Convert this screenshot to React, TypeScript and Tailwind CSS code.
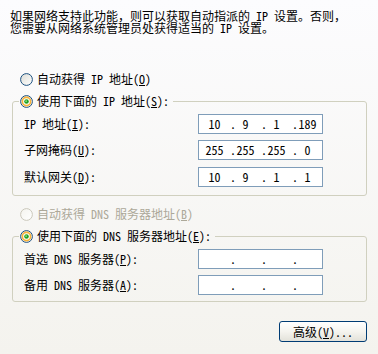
import React from "react";

function Radio({ checked = false, disabled = false, id }: { checked?: boolean; disabled?: boolean; id: string }) {
  return (
    <svg width="13" height="13" viewBox="0 0 13 13" className="shrink-0">
      <defs>
        <linearGradient id={id} x1="0" y1="0" x2="1" y2="1">
          <stop offset="0" stopColor={disabled ? "#f4f3ee" : "#dcdcd5"} />
          <stop offset="1" stopColor="#ffffff" />
        </linearGradient>
      </defs>
      <circle cx="6.5" cy="6.5" r="5.9" fill={`url(#${id})`} stroke={disabled ? "#cac8bb" : "#1c5180"} strokeWidth="1" />
      {checked && (
        <>
          <circle cx="6.5" cy="6.5" r="4.1" fill="#ffffff" stroke="#f8b33a" strokeWidth="1.6" />
          <circle cx="6.5" cy="6.5" r="2.3" fill="#21a121" />
          <circle cx="6.1" cy="6.1" r="0.9" fill="#8ee68e" />
        </>
      )}
    </svg>
  );
}

function IpBox({ parts }: { parts: string[] }) {
  return (
    <div className="h-[20px] w-[125px] border border-[#7f9db9] bg-white grid grid-cols-[31px_31px_31px_31px] items-center">
      {parts.map((p, i) => (
        <div key={i} className="relative h-full flex items-center justify-center">
          {i > 0 && <span className="absolute left-[0px] top-[3px] leading-[12px]">.</span>}
          <span className="leading-[12px]">{p}</span>
        </div>
      ))}
    </div>
  );
}

function Row({ label, parts, last = false }: { label: React.ReactNode; parts: string[]; last?: boolean }) {
  return (
    <div className={`grid grid-cols-[174px_125px] items-center h-[20px] ${last ? "mt-[1px]" : ""}`}>
      <span>{label}</span>
      <IpBox parts={parts} />
    </div>
  );
}

export default function App() {
  return (
    <div className="w-[378px] h-[354px] overflow-hidden bg-gradient-to-b from-[#fcfcfe] to-[#f4f3ee] text-[12px] leading-[12px] text-black font-['Noto_Sans_Mono_CJK_SC','Noto_Sans_CJK_SC',monospace]">
      <p className="pt-[10px] pl-[10px] leading-[12px]">
        如果网络支持此功能，则可以获取自动指派的 IP 设置。否则，
        <br />
        您需要从网络系统管理员处获得适当的 IP 设置。
      </p>

      <div className="mt-[38px] h-[14px] flex items-center gap-[4px] pl-[20px]">
        <Radio id="r1" />
        <span>
          自动获得 IP 地址(<span className="underline underline-offset-[1px]">O</span>)
        </span>
      </div>

      <fieldset className="mt-[8px] ml-[12px] w-[355px] border border-[#d0d0bf] rounded-[3px] pl-[6px] pb-[8px]">
        <legend className="h-[14px] flex items-center gap-[4px] pl-[1px] pr-[4px]">
          <Radio id="r2" checked />
          <span>
            使用下面的 IP 地址(<span className="underline underline-offset-[1px]">S</span>):
          </span>
        </legend>
        <div className="pl-[5px] pt-[6px] flex flex-col gap-[6px]">
          <Row
            label={
              <>
                IP 地址(<span className="underline underline-offset-[1px]">I</span>):
              </>
            }
            parts={["10", "9", "1", "189"]}
          />
          <Row
            label={
              <>
                子网掩码(<span className="underline underline-offset-[1px]">U</span>):
              </>
            }
            parts={["255", "255", "255", "0"]}
          />
          <Row
            last
            label={
              <>
                默认网关(<span className="underline underline-offset-[1px]">D</span>):
              </>
            }
            parts={["10", "9", "1", "1"]}
          />
        </div>
      </fieldset>

      <div className="mt-[11px] h-[14px] flex items-center gap-[4px] pl-[20px] text-[#aca899]">
        <Radio id="r3" disabled />
        <span>
          自动获得 DNS 服务器地址(<span className="underline underline-offset-[1px]">B</span>)
        </span>
      </div>

      <fieldset className="mt-[8px] ml-[12px] w-[355px] border border-[#d0d0bf] rounded-[3px] pl-[6px] pb-[6px]">
        <legend className="h-[14px] flex items-center gap-[4px] pl-[1px] pr-[4px]">
          <Radio id="r4" checked />
          <span>
            使用下面的 DNS 服务器地址(<span className="underline underline-offset-[1px]">E</span>):
          </span>
        </legend>
        <div className="pl-[5px] pt-[6px] flex flex-col gap-[6px]">
          <Row
            label={
              <>
                首选 DNS 服务器(<span className="underline underline-offset-[1px]">P</span>):
              </>
            }
            parts={["", "", "", ""]}
          />
          <Row
            label={
              <>
                备用 DNS 服务器(<span className="underline underline-offset-[1px]">A</span>):
              </>
            }
            parts={["", "", "", ""]}
          />
        </div>
      </fieldset>

      <div className="mt-[19px] flex justify-end pr-[11px]">
        <button className="w-[88px] h-[21px] rounded-[3px] border border-[#003c74] bg-gradient-to-b from-[#ffffff] via-[#f5f4ef] to-[#e3e2da] flex items-center justify-center leading-[12px]">
          高级(<span className="underline underline-offset-[1px]">V</span>)...
        </button>
      </div>
    </div>
  );
}
